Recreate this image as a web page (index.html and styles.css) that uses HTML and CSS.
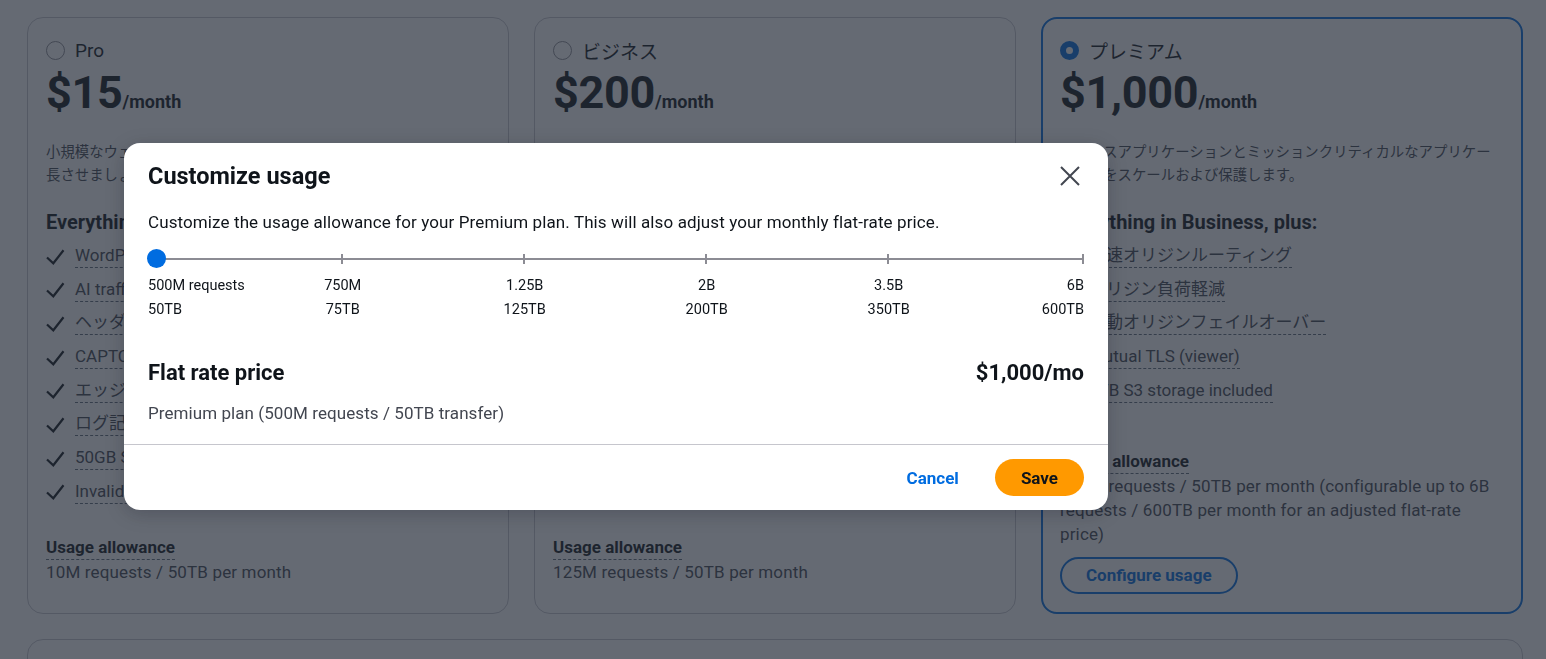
FILE: index.html
```html
<!DOCTYPE html>
<html lang="ja">
<head>
<meta charset="utf-8">
<title>Plans</title>
<link rel="stylesheet" href="styles.css">
</head>
<body>
<div class="page">
  <div class="plans">
    <section class="card">
      <div class="plan-head"><span class="radio"></span><span>Pro</span></div>
      <div class="price">$15<span class="per">/month</span></div>
      <p class="desc">小規模なウェブサイトやアプリケーションを保護し、迅速に成<br>長させましょう。</p>
      <h3 class="incl">Everything in Free, plus:</h3>
      <ul class="feat">
        <li><svg class="check" viewBox="0 0 20 20"><polyline points="1,11.5 7.3,17.3 17.5,4.3"/></svg><span>WordPress 保護ルール</span></li>
        <li><svg class="check" viewBox="0 0 20 20"><polyline points="1,11.5 7.3,17.3 17.5,4.3"/></svg><span>AI traffic monitoring</span></li>
        <li><svg class="check" viewBox="0 0 20 20"><polyline points="1,11.5 7.3,17.3 17.5,4.3"/></svg><span>ヘッダーベースのルール</span></li>
        <li><svg class="check" viewBox="0 0 20 20"><polyline points="1,11.5 7.3,17.3 17.5,4.3"/></svg><span>CAPTCHA チャレンジ</span></li>
        <li><svg class="check" viewBox="0 0 20 20"><polyline points="1,11.5 7.3,17.3 17.5,4.3"/></svg><span>エッジでのカスタムロジック</span></li>
        <li><svg class="check" viewBox="0 0 20 20"><polyline points="1,11.5 7.3,17.3 17.5,4.3"/></svg><span>ログ記録と分析</span></li>
        <li><svg class="check" viewBox="0 0 20 20"><polyline points="1,11.5 7.3,17.3 17.5,4.3"/></svg><span>50GB S3 storage included</span></li>
        <li><svg class="check" viewBox="0 0 20 20"><polyline points="1,11.5 7.3,17.3 17.5,4.3"/></svg><span>Invalidation requests</span></li>
      </ul>
      <div class="usage usage-pad">
        <span class="usage-label">Usage allowance</span>
        <p class="usage-text">10M requests / 50TB per month</p>
      </div>
    </section>

    <section class="card">
      <div class="plan-head"><span class="radio"></span><span>ビジネス</span></div>
      <div class="price">$200<span class="per">/month</span></div>
      <p class="desc">成長するビジネスのウェブサイトとアプリケーションを高度な機能で保護します。</p>
      <h3 class="incl">Everything in Pro, plus:</h3>
      <ul class="feat">
        <li><svg class="check" viewBox="0 0 20 20"><polyline points="1,11.5 7.3,17.3 17.5,4.3"/></svg><span>高度なボット対策</span></li>
        <li><svg class="check" viewBox="0 0 20 20"><polyline points="1,11.5 7.3,17.3 17.5,4.3"/></svg><span>カスタム証明書</span></li>
        <li><svg class="check" viewBox="0 0 20 20"><polyline points="1,11.5 7.3,17.3 17.5,4.3"/></svg><span>リアルタイムログ</span></li>
        <li><svg class="check" viewBox="0 0 20 20"><polyline points="1,11.5 7.3,17.3 17.5,4.3"/></svg><span>オリジンシールド</span></li>
        <li><svg class="check" viewBox="0 0 20 20"><polyline points="1,11.5 7.3,17.3 17.5,4.3"/></svg><span>1TB S3 storage included</span></li>
      </ul>
      <div class="usage usage-pad">
        <span class="usage-label">Usage allowance</span>
        <p class="usage-text">125M requests / 50TB per month</p>
      </div>
    </section>

    <section class="card card-selected">
      <div class="plan-head"><span class="radio radio-on"></span><span>プレミアム</span></div>
      <div class="price">$1,000<span class="per">/month</span></div>
      <p class="desc">ビジネスアプリケーションとミッションクリティカルなアプリケー<br>ションをスケールおよび保護します。</p>
      <h3 class="incl">Everything in Business, plus:</h3>
      <ul class="feat">
        <li><svg class="check" viewBox="0 0 20 20"><polyline points="1,11.5 7.3,17.3 17.5,4.3"/></svg><span>高速オリジンルーティング</span></li>
        <li><svg class="check" viewBox="0 0 20 20"><polyline points="1,11.5 7.3,17.3 17.5,4.3"/></svg><span>オリジン負荷軽減</span></li>
        <li><svg class="check" viewBox="0 0 20 20"><polyline points="1,11.5 7.3,17.3 17.5,4.3"/></svg><span>自動オリジンフェイルオーバー</span></li>
        <li><svg class="check" viewBox="0 0 20 20"><polyline points="1,11.5 7.3,17.3 17.5,4.3"/></svg><span>Mutual TLS (viewer)</span></li>
        <li><svg class="check" viewBox="0 0 20 20"><polyline points="1,11.5 7.3,17.3 17.5,4.3"/></svg><span>5TB S3 storage included</span></li>
      </ul>
      <div class="usage">
        <span class="usage-label">Usage allowance</span>
        <p class="usage-text">500M requests / 50TB per month (configurable up to 6B requests / 600TB per month for an adjusted flat-rate price)</p>
        <button class="configure">Configure usage</button>
      </div>
    </section>
  </div>
  <section class="more"></section>
</div>

<div class="overlay"></div>

<div class="modal" role="dialog">
  <div class="modal-body">
    <div class="modal-head">
      <h2 class="modal-title">Customize usage</h2>
      <button class="close" aria-label="Close">
        <svg viewBox="0 0 20 20"><path d="M1 1L19 19M19 1L1 19"/></svg>
      </button>
    </div>
    <p class="modal-desc">Customize the usage allowance for your Premium plan. This will also adjust your monthly flat-rate price.</p>
    <div class="slider">
      <div class="track">
        <span class="seg"></span><span class="seg"></span><span class="seg"></span><span class="seg"></span><span class="seg"></span>
      </div>
      <span class="thumb"></span>
    </div>
    <div class="ticks-labels">
      <div class="lbl lbl-0">500M requests<br>50TB</div>
      <div class="lbl lbl-1">750M<br>75TB</div>
      <div class="lbl lbl-2">1.25B<br>125TB</div>
      <div class="lbl lbl-3">2B<br>200TB</div>
      <div class="lbl lbl-4">3.5B<br>350TB</div>
      <div class="lbl lbl-5">6B<br>600TB</div>
    </div>
    <div class="rate-row">
      <span>Flat rate price</span>
      <span>$1,000/mo</span>
    </div>
    <p class="rate-sub">Premium plan (500M requests / 50TB transfer)</p>
  </div>
  <div class="modal-foot">
    <button class="btn-cancel">Cancel</button>
    <button class="btn-save">Save</button>
  </div>
</div>
</body>
</html>
```

FILE: styles.css
```css
* { box-sizing: border-box; }

body {
  margin: 0;
  font-family: Roboto, "Noto Sans CJK JP", sans-serif;
  color: #0f141a;
  background: #ffffff;
}

.page {
  padding: 17px 23px 0 27px;
  height: 659px;
  overflow: hidden;
}

.plans {
  display: grid;
  grid-template-columns: repeat(3, 1fr);
  gap: 25px;
}

.card {
  border: 1px solid #c6c6cd;
  border-radius: 16px;
  padding: 20px 18px 19px;
  display: flex;
  flex-direction: column;
}

.card-selected {
  border: 2px solid #006ce0;
  padding: 19px 17px 18px;
}

.plan-head {
  display: flex;
  align-items: center;
  gap: 10px;
  height: 24px;
  font-size: 19px;
  color: #0f141a;
}

.radio {
  width: 19px;
  height: 19px;
  border-radius: 50%;
  border: 1.5px solid #8c8c94;
  background: #fff;
  flex: none;
}

.radio-on {
  border: 6px solid #006ce0;
}

.price {
  margin-top: 3px;
  font-size: 45px;
  line-height: 56px;
  font-weight: 700;
  letter-spacing: -0.3px;
}

.per {
  font-size: 18px;
  line-height: 1;
  letter-spacing: 0;
}

.desc {
  margin: 19.5px 0 0;
  font-size: 14.4px;
  line-height: 23.5px;
  color: #424650;
}

.incl {
  margin: 20.5px 0 0;
  font-size: 20px;
  line-height: 28px;
  font-weight: 700;
}

.feat {
  list-style: none;
  margin: 7px 0 0;
  padding: 0;
  display: flex;
  flex-direction: column;
  gap: 8.7px;
}

.feat li {
  display: flex;
  align-items: center;
  gap: 9px;
  font-size: 17px;
  line-height: 24px;
  color: #424650;
}

.feat li span {
  border-bottom: 1px dashed #5f6b7a;
}

.check {
  width: 20px;
  height: 20px;
  flex: none;
}

.check polyline {
  fill: none;
  stroke: #0f141a;
  stroke-width: 2.2;
}

.usage {
  margin-top: auto;
  padding-top: 31px;
  display: flex;
  flex-direction: column;
}

.usage-pad {
  padding-bottom: 10px;
}

.usage-label {
  align-self: flex-start;
  font-size: 17px;
  line-height: 24px;
  font-weight: 700;
  border-bottom: 1px dashed #5f6b7a;
}

.usage-text {
  margin: 0;
  font-size: 17px;
  line-height: 24px;
  letter-spacing: 0.15px;
  color: #424650;
}

.configure {
  align-self: flex-start;
  margin-top: 11px;
  height: 37px;
  padding: 0 24px;
  border: 2px solid #006ce0;
  border-radius: 20px;
  background: #fff;
  color: #006ce0;
  font-family: Roboto, sans-serif;
  font-size: 17px;
  font-weight: 700;
}

.more {
  margin-top: 25px;
  height: 120px;
  border: 1px solid #c6c6cd;
  border-radius: 16px;
}

/* overlay + modal */
.overlay {
  position: fixed;
  inset: 0;
  background: rgba(35, 43, 55, 0.7);
}

.modal {
  position: fixed;
  left: 124px;
  top: 143px;
  width: 984px;
  background: #fff;
  border-radius: 16px;
  box-shadow: 0 4px 20px rgba(0, 7, 22, 0.2);
}

.modal-body {
  padding: 17px 24px 19px;
}

.modal-head {
  display: flex;
  align-items: center;
  justify-content: space-between;
}

.modal-title {
  margin: 0;
  font-size: 23.5px;
  line-height: 32px;
  font-weight: 700;
}

.close {
  width: 28px;
  height: 28px;
  padding: 4px;
  border: none;
  background: none;
  display: flex;
}

.close svg {
  width: 20px;
  height: 20px;
}

.close path {
  stroke: #424650;
  stroke-width: 2;
  fill: none;
}

.modal-desc {
  margin: 18px 0 0;
  font-size: 17px;
  line-height: 24px;
  letter-spacing: 0.11px;
}

.slider {
  position: relative;
  margin-top: 14.5px;
  height: 20px;
}

.track {
  display: grid;
  grid-template-columns: 194.7fr 182fr 182fr 182fr 195.3fr;
  align-items: center;
  height: 20px;
  background: linear-gradient(#8c8c94, #8c8c94) center / 100% 2px no-repeat;
}

.seg {
  height: 10px;
  border-right: 2px solid #8c8c94;
}

.thumb {
  position: absolute;
  left: -1px;
  top: 0.5px;
  width: 19px;
  height: 19px;
  border-radius: 50%;
  background: #006ce0;
}

.ticks-labels {
  display: grid;
  grid-template-columns: 103.7fr repeat(8, 91fr) 104.3fr;
  margin-top: 5px;
  font-size: 14.5px;
  line-height: 24px;
}

.lbl-0 { grid-column: 1; text-align: left; white-space: nowrap; }
.lbl-1 { grid-column: 2 / span 2; text-align: center; }
.lbl-2 { grid-column: 4 / span 2; text-align: center; }
.lbl-3 { grid-column: 6 / span 2; text-align: center; }
.lbl-4 { grid-column: 8 / span 2; text-align: center; }
.lbl-5 { grid-column: 10; text-align: right; }

.rate-row {
  display: flex;
  justify-content: space-between;
  margin-top: 37px;
  font-size: 22px;
  line-height: 28px;
  font-weight: 700;
}

.rate-sub {
  margin: 14px 0 0;
  font-size: 17px;
  line-height: 24px;
  letter-spacing: 0.07px;
  color: #424650;
}

.modal-foot {
  border-top: 1px solid #c6c6cd;
  padding: 14.5px 24px 14px;
  display: flex;
  justify-content: flex-end;
  align-items: center;
  gap: 16px;
}

.btn-cancel {
  height: 37px;
  padding: 0 20px;
  border: none;
  background: none;
  color: #006ce0;
  font-family: Roboto, sans-serif;
  font-size: 17px;
  font-weight: 700;
}

.btn-save {
  height: 37px;
  padding: 0 26px;
  border: none;
  border-radius: 20px;
  background: #ff9900;
  color: #0f141a;
  font-family: Roboto, sans-serif;
  font-size: 17px;
  font-weight: 700;
}
```
